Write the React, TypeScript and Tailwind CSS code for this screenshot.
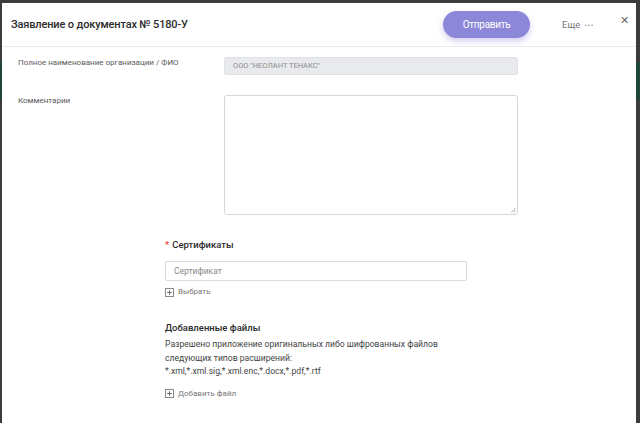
import React from "react";

function PlusBox() {
	return (
		<svg width="9" height="9" viewBox="0 0 9 9" className="shrink-0">
			<rect x="0.5" y="0.5" width="8" height="8" fill="none" stroke="#8a8a8a" strokeWidth="1" />
			<path d="M4.5 2.2v4.6M2.2 4.5h4.6" stroke="#6a6a6a" strokeWidth="1" />
		</svg>
	);
}

function App() {
	const font = { fontFamily: 'Roboto, "Noto Sans", sans-serif' };

	return (
		<div
			className="w-[640px] h-[423px] bg-[linear-gradient(to_bottom,#3b3c3c_62px,#1f4536_62px,#1f4536_100px,#3b3c3c_100px)] overflow-hidden pt-[3px] pl-[2px]"
			style={font}
		>
			<div className="w-[634px] h-[420px] bg-white flex flex-col">
				{/* header */}
				<div className="h-[44px] shrink-0 flex items-center border-b border-[#ececec] pl-[9px] pr-[7px]">
					<div className="text-[11px] font-medium text-[#2b2b2b] tracking-[-0.15px] mt-[2px]">
						Заявление о документах № 5180-У
					</div>
					<button className="ml-auto w-[87px] h-[27px] rounded-full bg-[#8c87d8] text-white text-[10px] tracking-[-0.3px] shadow-[0_3px_6px_rgba(120,110,210,0.35)]">
						Отправить
					</button>
					<div className="ml-[32px] text-[9.5px] text-[#777] flex items-center gap-[4px] mt-[2px]">
						Еще <span className="tracking-[0.5px] text-[#999] text-[8px]">•••</span>
					</div>
					<div className="ml-[26px] -mt-[8px] text-[#666] text-[11px] leading-none">✕</div>
				</div>

				{/* main fields */}
				<div className="pl-[16px] pt-[10px]">
					<div className="flex">
						<div className="w-[206px] text-[8px] text-[#5a5a5a] leading-[12px]">
							Полное наименование организации / ФИО
						</div>
						<div className="w-[294px] h-[18px] rounded-[2px] bg-[#e8eaed] border border-[#dfe1e4] text-[7.5px] text-[#8a8a8a] flex items-center pl-[8px]">
							ООО "НЕОЛАНТ ТЕНАКС"
						</div>
					</div>
					<div className="flex mt-[20px]">
						<div className="w-[206px] text-[8px] text-[#5a5a5a] leading-[12px]">Комментарии</div>
						<div className="w-[294px] h-[120px] rounded-[3px] border border-[#d6d6de] relative">
							<svg width="6" height="6" viewBox="0 0 6 6" className="absolute right-[1px] bottom-[1px]">
								<path d="M5.5 1L1 5.5M5.5 3.5L3.5 5.5" stroke="#9a9a9a" strokeWidth="0.8" />
							</svg>
						</div>
					</div>
				</div>

				{/* certificates */}
				<div className="pl-[163px] mt-[23px]">
					<div className="text-[9.5px] font-medium text-[#2b2b2b] leading-[14px]">
						<span className="text-[#e0453a] mr-[3px]">*</span>Сертификаты
					</div>
					<div className="mt-[9px] w-[302px] h-[20px] rounded-[2px] border border-[#dcdcdc] text-[8.5px] text-[#8a8a8a] flex items-center pl-[8px]">
						Сертификат
					</div>
					<div className="mt-[6px] flex items-center gap-[4px] text-[8px] text-[#777] leading-[10px]">
						<PlusBox />
						Выбрать
					</div>

					<div className="mt-[24px] text-[9.5px] font-medium text-[#2b2b2b] leading-[14px]">
						Добавленные файлы
					</div>
					<div className="mt-[3px] text-[8.6px] text-[#444] leading-[13.5px]">
						Разрешено приложение оригинальных либо шифрованных файлов
						<br />
						следующих типов расширений:
						<br />
						*.xml,*.xml.sig,*.xml.enc,*.docx,*.pdf,*.rtf
					</div>
					<div className="mt-[10px] flex items-center gap-[4px] text-[8px] text-[#777] leading-[10px]">
						<PlusBox />
						Добавить файл
					</div>
				</div>
			</div>
		</div>
	);
}

export default App;
